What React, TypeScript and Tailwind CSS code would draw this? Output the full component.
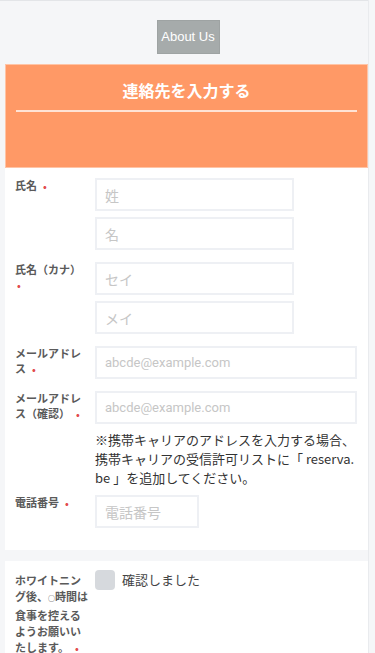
import React from "react"

const jp = "font-['Noto_Sans_CJK_JP',sans-serif]"

function Req() {
  return <span className="ml-[6px] text-[10px] text-[#e24b4b]">•</span>
}

function Label({ children }: { children: React.ReactNode }) {
  return (
    <div className="w-[76px] shrink-0 text-[11px] font-bold leading-[15px] text-[#5a5a5a]">
      {children}
    </div>
  )
}

function Field({ placeholder, w, latin }: { placeholder: string; w: string; latin?: boolean }) {
  return (
    <input
      placeholder={placeholder}
      className={`${w} h-[33px] shrink-0 border-2 border-[#eef0f4] bg-white px-[8px] outline-none placeholder:text-[#c6c6c6] ${
        latin ? "font-['Roboto','Liberation_Sans',sans-serif] text-[13px]" : "text-[14px]"
      }`}
    />
  )
}

export default function App() {
  return (
    <div className={`${jp} flex min-h-[653px] w-[375px] bg-[#f5f6f8] text-[#333]`}>
      <div className="flex w-[368px] shrink-0 flex-col border-t border-[#e3e5e8] pl-[5px]">
        <div className="flex justify-center pt-[19px] pb-[10px] pl-[3px]">
          <button className="h-[34px] w-[63px] border border-[#9ea3a3] bg-[#a6abab] font-['Liberation_Sans',sans-serif] text-[13px] text-white">
            About Us
          </button>
        </div>

        <div className="h-[104px] border border-[#ffc4a6] bg-[#ff9966] px-[10px]">
          <div className="pt-[13px] pb-[8px] text-center text-[16px] font-bold leading-[24px] text-white">
            連絡先を入力する
          </div>
          <div className="h-[2px] bg-[#ffe3d5]" />
        </div>

        <div className="flex flex-col bg-white pt-[10px] pr-[11px] pb-[22px] pl-[10px]">
          <div className="flex gap-[4px]">
            <Label>
              氏名
              <Req />
            </Label>
            <div className="flex flex-col gap-[6px]">
              <Field placeholder="姓" w="w-[199px]" />
              <Field placeholder="名" w="w-[199px]" />
            </div>
          </div>

          <div className="mt-[12px] flex gap-[4px]">
            <Label>
              氏名（カナ）
              <br />
              <span className="ml-[2px] text-[10px] text-[#e24b4b]">•</span>
            </Label>
            <div className="flex flex-col gap-[6px]">
              <Field placeholder="セイ" w="w-[199px]" />
              <Field placeholder="メイ" w="w-[199px]" />
            </div>
          </div>

          <div className="mt-[12px] flex gap-[4px]">
            <Label>
              メールアドレ
              <br />
              ス<Req />
            </Label>
            <Field placeholder="abcde@example.com" w="w-[262px]" latin />
          </div>

          <div className="mt-[12px] flex gap-[4px]">
            <Label>
              メールアドレ
              <br />
              ス（確認）
              <Req />
            </Label>
            <div className="flex flex-col">
              <Field placeholder="abcde@example.com" w="w-[262px]" latin />
              <p className="mt-[6px] w-[262px] text-[13px] leading-[19px] text-[#333]">
                ※携帯キャリアのアドレスを入力する場合、携帯キャリアの受信許可リストに「 reserva.
                <br />
                be 」を追加してください。
              </p>
            </div>
          </div>

          <div className="mt-[8px] flex gap-[4px]">
            <Label>
              電話番号
              <Req />
            </Label>
            <Field placeholder="電話番号" w="w-[104px]" />
          </div>
        </div>

        <div className="h-[11px]" />

        <div className="flex flex-1 gap-[4px] bg-white pt-[9px] pl-[10px]">
          <div className="w-[76px] shrink-0 pt-[2px] text-[11px] font-bold leading-[16.3px] text-[#5a5a5a]">
            ホワイトニン
            <br />
            グ後、
            <span className="text-[7px]">○</span>
            時間は
            <br />
            食事を控える
            <br />
            ようお願いい
            <br />
            たします。
            <Req />
          </div>
          <label className="flex items-start gap-[7px]">
            <span className="h-[20px] w-[20px] rounded-[4px] bg-[#d6d9dd]" />
            <span className="text-[13px] leading-[20px] text-[#444]">確認しました</span>
          </label>
        </div>
      </div>
      <div className="flex-1 border-l border-[#e9ebee] bg-[#f5f6f8]" />
    </div>
  )
}
